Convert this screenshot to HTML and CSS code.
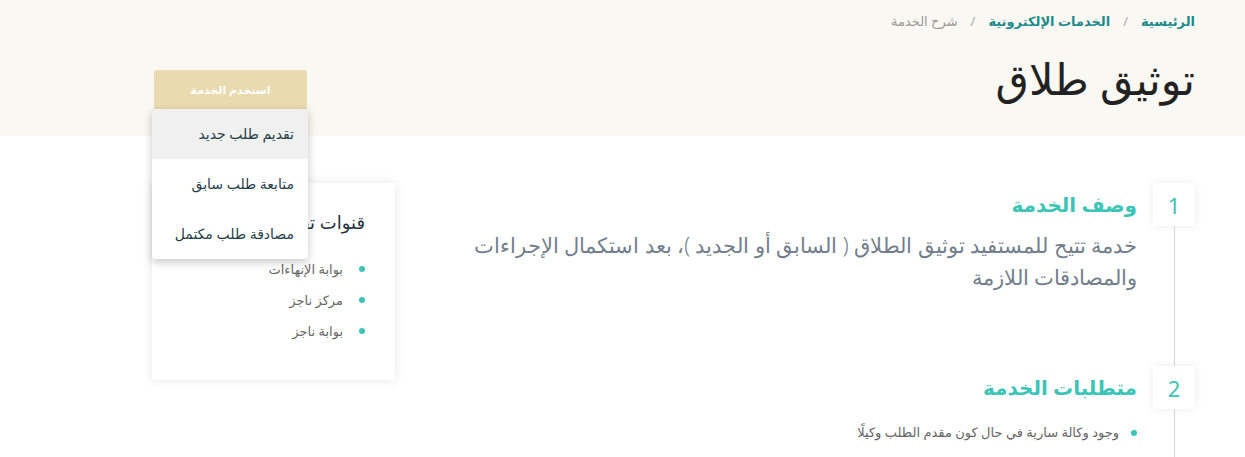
FILE: index.html
```html
<!DOCTYPE html>
<html lang="ar" dir="rtl">
<head>
<meta charset="utf-8">
<link rel="stylesheet" href="styles.css">
</head>
<body>
<header class="hero">
  <div class="container">
    <nav class="crumbs">
      <a class="crumb-link">الرئيسية</a>
      <span class="sep">/</span>
      <a class="crumb-link">الخدمات الإلكترونية</a>
      <span class="sep">/</span>
      <span class="crumb-current">شرح الخدمة</span>
    </nav>
    <div class="title-row">
      <h1 class="title">توثيق طلاق</h1>
      <div class="use">
        <button class="use-btn">استخدم الخدمة</button>
        <ul class="menu">
          <li class="menu-item active">تقديم طلب جديد</li>
          <li class="menu-item">متابعة طلب سابق</li>
          <li class="menu-item">مصادقة طلب مكتمل</li>
        </ul>
      </div>
    </div>
  </div>
</header>
<main class="container main">
  <section class="steps">
    <div class="step">
      <div class="rail"><div class="num">1</div><div class="line"></div></div>
      <div class="step-body">
        <h2 class="step-title">وصف الخدمة</h2>
        <p class="desc">خدمة تتيح للمستفيد توثيق الطلاق ( السابق أو الجديد )، بعد استكمال الإجراءات والمصادقات اللازمة</p>
      </div>
    </div>
    <div class="step">
      <div class="rail"><div class="num">2</div><div class="line"></div></div>
      <div class="step-body">
        <h2 class="step-title">متطلبات الخدمة</h2>
        <ul class="bullets">
          <li>وجود وكالة سارية في حال كون مقدم الطلب وكيلًا</li>
        </ul>
      </div>
    </div>
  </section>
  <aside class="card">
    <h3 class="card-title">قنوات تقديم الخدمة</h3>
    <ul class="bullets side">
      <li>بوابة الإنهاءات</li>
      <li>مركز ناجز</li>
      <li>بوابة ناجز</li>
    </ul>
  </aside>
</main>
</body>
</html>
```
FILE: styles.css
```css
* { box-sizing: border-box; }
html, body { margin: 0; padding: 0; }
body {
  font-family: "Noto Sans", "DejaVu Sans", sans-serif;
  background: #fff;
  color: #333;
  width: 1245px;
  height: 457px;
  overflow: hidden;
}
.container {
  padding-right: 50px;
  padding-left: 152px;
}
.hero {
  background: #f9f8f3;
  height: 136px;
}
.crumbs {
  display: flex;
  align-items: center;
  gap: 13px;
  padding-top: 11px;
  font-size: 13px;
  line-height: 20px;
}
.crumb-link { color: #1d8a8c; font-weight: 600; }
.sep { color: #aaa; }
.crumb-current { color: #999; }
.title-row {
  display: flex;
  justify-content: space-between;
  align-items: flex-start;
  margin-top: 29px;
}
.title {
  margin: -6px 0 0;
  font-size: 43px;
  font-weight: 500;
  color: #222;
  line-height: 50px;
}
.use {
  position: relative;
  width: 156px;
  margin-top: 10px;
}
.use-btn {
  display: block;
  width: 153px;
  margin: 0 1px 0 2px;
  height: 39px;
  border: 0;
  border-radius: 3px 3px 0 0;
  background: #e9dbaf;
  color: #fff;
  font-family: inherit;
  font-weight: 700;
  font-size: 11px;
}
.menu {
  position: absolute;
  top: 39px;
  right: 0;
  width: 156px;
  margin: 0;
  padding: 0;
  list-style: none;
  background: #fff;
  border-radius: 3px;
  box-shadow: 0 3px 10px rgba(0,0,0,.22);
  z-index: 5;
}
.menu-item {
  height: 50px;
  line-height: 50px;
  padding-right: 14px;
  font-size: 14px;
  color: #1f3d47;
}
.menu-item.active { background: #f0f0f0; }
.main {
  display: flex;
  gap: 76px;
  padding-top: 47px;
}
.steps { flex: 1; }
.step {
  display: flex;
  gap: 16px;
}
.step:first-child { height: 183px; }
.rail {
  display: flex;
  flex-direction: column;
  align-items: center;
  width: 42px;
  flex-shrink: 0;
}
.num {
  width: 42px;
  height: 43px;
  background: #fff;
  box-shadow: 0 0 8px rgba(0,0,0,.08);
  color: #3cc4b6;
  font-size: 22px;
  display: flex;
  align-items: center;
  justify-content: center;
}
.line { flex: 1; width: 1px; background: #d6d6d6; min-height: 60px; }
.step-body { flex: 1; }
.step-title {
  margin: 8px 0 0;
  color: #3cc4b6;
  font-size: 20px;
  font-weight: 700;
  line-height: 28px;
}
.desc {
  margin: 10px 0 0;
  font-size: 21px;
  line-height: 32px;
  color: #737e8c;
  font-weight: 300;
}
.bullets {
  list-style: none;
  margin: 20px 0 0;
  padding: 0 18px 0 0;
  font-size: 13px;
  color: #666;
}
.bullets li { position: relative; line-height: 20px; }
.bullets li::before {
  content: "";
  position: absolute;
  right: -18px;
  top: 8px;
  width: 6px;
  height: 6px;
  border-radius: 50%;
  background: #3cc4b6;
}
.card {
  width: 243px;
  height: 197px;
  margin-right: -1px;
  background: #fff;
  box-shadow: 0 0 10px rgba(0,0,0,.1);
  padding: 25px 30px 0 10px;
}
.card-title {
  margin: 0;
  font-size: 18px;
  font-weight: 500;
  color: #1f3340;
  line-height: 28px;
}
.bullets.side { margin-top: 18px; padding-right: 22px; }
.bullets.side li { line-height: 31px; }
.bullets.side li::before { top: 12px; right: -22px; }
```
